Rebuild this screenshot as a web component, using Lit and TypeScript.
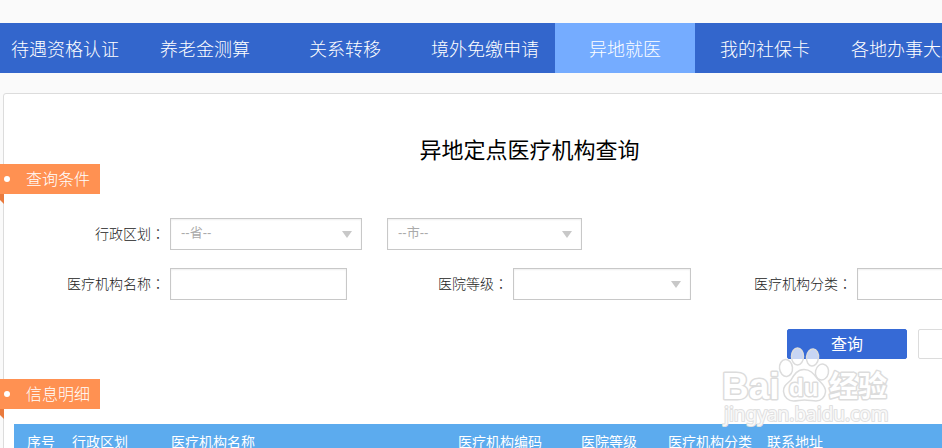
import { LitElement, html, css } from "lit";
import { customElement, property } from "lit/decorators.js";
import { classMap } from "lit/directives/class-map.js";

const NAV_ITEMS = [
  "待遇资格认证",
  "养老金测算",
  "关系转移",
  "境外免缴申请",
  "异地就医",
  "我的社保卡",
  "各地办事大厅",
];
const ACTIVE_ITEM = "异地就医";

const COLUMNS = [
  { title: "序号", width: 45 },
  { title: "行政区划", width: 99 },
  { title: "医疗机构名称", width: 287 },
  { title: "医疗机构编码", width: 123 },
  { title: "医院等级", width: 87 },
  { title: "医疗机构分类", width: 99 },
  { title: "联系地址", width: 0 },
];

@customElement("section-ribbon")
export class SectionRibbon extends LitElement {
  @property() label = "";

  static styles = css`
    :host {
      display: block;
      width: 110px;
      margin-left: -14px;
      position: relative;
    }
    .ribbon {
      display: flex;
      align-items: center;
      gap: 16px;
      height: 30px;
      margin: 0;
      padding-left: 14px;
      background: #ff9152;
      color: #fff;
      font-size: 16px;
      font-weight: 300;
      line-height: 28px;
    }
    .dot {
      width: 6px;
      height: 6px;
      border-radius: 50%;
      background: #fff;
    }
    .text {
      height: 30px;
    }
    .fold {
      position: absolute;
      top: 100%;
      left: 4px;
      width: 10px;
      height: 10px;
      background: #e97a3d;
      clip-path: polygon(0 0, 100% 0, 100% 100%);
    }
  `;

  render() {
    return html`
      <h2 class="ribbon"><span class="dot"></span><span class="text">${this.label}</span></h2>
      <span class="fold"></span>
    `;
  }
}

@customElement("baidu-mark")
export class BaiduMark extends LitElement {
  static styles = css`
    :host {
      display: block;
      pointer-events: none;
    }
    .mark {
      display: block;
    }
    .shape {
      fill: #fff;
      fill-opacity: 0.72;
      stroke: #dcdcdc;
      stroke-width: 1.5;
    }
    .outline {
      fill: #fff;
      stroke: #dcdcdc;
      stroke-width: 3;
      stroke-linejoin: round;
      paint-order: stroke;
    }
    .latin {
      font-family: "Liberation Sans", sans-serif;
      font-weight: 700;
      font-size: 37px;
    }
    .du {
      font-family: "Liberation Sans", sans-serif;
      font-weight: 700;
      font-size: 24px;
    }
    .han {
      font-family: "Noto Sans CJK SC", sans-serif;
      font-weight: 700;
      font-size: 29px;
    }
    .url {
      font-family: "Noto Sans", sans-serif;
      font-size: 19px;
      font-weight: 400;
      fill-opacity: 0.8;
      stroke: #e0e0e0;
      stroke-width: 2;
    }
  `;

  render() {
    return html`
      <svg class="mark" width="180" height="90" viewBox="0 0 180 90" aria-hidden="true">
        <text class="outline latin" x="4" y="55">Bai</text>
        <ellipse class="shape" cx="68" cy="24" rx="6.500" ry="8.500" transform="rotate(-6 68 24)" />
        <ellipse class="shape" cx="79.500" cy="12.500" rx="6" ry="8.500" />
        <ellipse class="shape" cx="94.500" cy="13.500" rx="6" ry="8.500" transform="rotate(6 94.500 13.500)" />
        <ellipse class="shape" cx="104" cy="28" rx="6.500" ry="8" transform="rotate(12 104 28)" />
        <path
          class="shape"
          d="M86 25.500c-7 0-10 5.500-13 10.500-4 4-8 6-7.500 11.500.5 6 5 9.500 10 9.500 4 0 7-1 11-1s8 1 11.500 1c5 0 9-3.500 9.500-9 .5-6-4-8.500-7.500-12.500-4-5-7-10-14-10z"
        />
        <text class="outline du" x="71" y="52">du</text>
        <text class="outline han" x="111" y="53">经验</text>
        <text class="outline url" x="6" y="77">jingyan.baidu.com</text>
      </svg>
    `;
  }
}

@customElement("app-root")
export class AppRoot extends LitElement {
  static styles = css`
    :host {
      display: block;
      position: relative;
      box-sizing: border-box;
      height: 100vh;
      padding-top: 23px;
      overflow: hidden;
      background: #fafafa;
      color: #222;
      font-family: "Noto Sans CJK SC", sans-serif;
      font-size: 14px;
      font-weight: 300;
    }
    * {
      box-sizing: border-box;
    }
    .nav {
      height: 50px;
      background: #3366cc;
    }
    .nav-list {
      display: flex;
      margin: 0 0 0 -5px;
      padding: 0;
      list-style: none;
    }
    .nav-link {
      display: block;
      width: 140px;
      height: 50px;
      color: #fff;
      font-size: 18px;
      line-height: 50px;
      text-align: center;
      text-decoration: none;
      white-space: nowrap;
    }
    .active {
      background: #75acff;
    }
    .card {
      margin: 20px -114px 0 3px;
      padding-top: 40px;
      min-height: 100%;
      border: 1px solid #dcdcdc;
      border-radius: 3px;
      background: #fff;
    }
    .title {
      margin: 0;
      color: #000;
      font-size: 22px;
      font-weight: 400;
      line-height: 28px;
      text-align: center;
    }
    .ribbon-first {
      margin-top: 2px;
    }
    .form {
      display: flex;
      flex-direction: column;
      gap: 18px;
      margin-top: 24px;
    }
    .row {
      display: flex;
      align-items: center;
    }
    .label {
      flex: none;
      width: 166px;
      height: 32px;
      padding-right: 5px;
      text-align: right;
      line-height: 30px;
      white-space: nowrap;
    }
    .colon {
      font-family: "Noto Sans CJK TC", sans-serif;
    }
    .picker {
      position: relative;
      flex: none;
      width: 178px;
    }
    .picker::after {
      content: "";
      position: absolute;
      top: 13px;
      right: 10px;
      border: 5px solid transparent;
      border-top: 7px solid #c8c8c8;
      border-bottom: 0;
      pointer-events: none;
    }
    .province {
      width: 192px;
      margin-right: 25px;
    }
    .city {
      width: 195px;
    }
    .field {
      display: block;
      flex: none;
      width: 100%;
      height: 32px;
      margin: 0;
      padding: 0 10px 4px;
      appearance: none;
      border: 1px solid #c8c8c8;
      border-radius: 0;
      background: #fff;
      box-shadow: inset 0 1px 2px #eee;
      color: #aaa;
      font-family: "Liberation Sans", "Noto Sans CJK SC", sans-serif;
      font-size: 13px;
    }
    .name {
      width: 177px;
    }
    .actions {
      display: flex;
      justify-content: flex-end;
      gap: 11px;
      margin: 29px 17px 20px 0;
    }
    .button {
      width: 120px;
      height: 30px;
      padding: 0 0 2px;
      border: 1px solid #dcdcdc;
      border-radius: 2px;
      background: #fff;
      color: #444;
      font-family: inherit;
      font-size: 16px;
      font-weight: 400;
      line-height: 26px;
    }
    .primary {
      border-color: #366ad6;
      background: #366ad6;
      color: #fff;
    }
    .table {
      width: calc(100% - 20px);
      margin: 15px 10px 0;
      border-collapse: collapse;
      table-layout: fixed;
      background: #5cabee;
      color: #fff;
    }
    .head {
      height: 36px;
      padding: 0 0 2px 13px;
      font-weight: 400;
      text-align: left;
      white-space: nowrap;
    }
    .watermark {
      position: absolute;
      top: 344px;
      left: 718px;
    }
  `;

  private caption(text: string, target: string) {
    return html`<label class="label" for=${target}>${text}<span class="colon" lang="zh-TW">：</span></label>`;
  }

  render() {
    return html`
      <nav class="nav">
        <ul class="nav-list">
          ${NAV_ITEMS.map(
            (item) => html`<li>
              <a class=${classMap({ "nav-link": true, active: item === ACTIVE_ITEM })} href="#">${item}</a>
            </li>`
          )}
        </ul>
      </nav>
      <main class="card">
        <h1 class="title">异地定点医疗机构查询</h1>
        <section-ribbon class="ribbon-first" label="查询条件"></section-ribbon>
        <form class="form">
          <div class="row">
            ${this.caption("行政区划", "province")}
            <div class="picker province">
              <select class="field" id="province"><option>--省--</option></select>
            </div>
            <div class="picker city">
              <select class="field" aria-label="市"><option>--市--</option></select>
            </div>
          </div>
          <div class="row">
            ${this.caption("医疗机构名称", "name")}
            <input class="field name" id="name" type="text" />
            ${this.caption("医院等级", "level")}
            <div class="picker"><select class="field" id="level"></select></div>
            ${this.caption("医疗机构分类", "kind")}
            <div class="picker"><select class="field" id="kind"></select></div>
          </div>
        </form>
        <div class="actions">
          <button class="button primary" type="button">查询</button>
          <button class="button" type="button">重置</button>
        </div>
        <section-ribbon label="信息明细"></section-ribbon>
        <table class="table">
          <colgroup>
            ${COLUMNS.map((c) => html`<col style=${c.width ? `width:${c.width}px` : ""} />`)}
          </colgroup>
          <thead>
            <tr>
              ${COLUMNS.map((c) => html`<th class="head" scope="col">${c.title}</th>`)}
            </tr>
          </thead>
        </table>
      </main>
      <baidu-mark class="watermark"></baidu-mark>
    `;
  }
}
